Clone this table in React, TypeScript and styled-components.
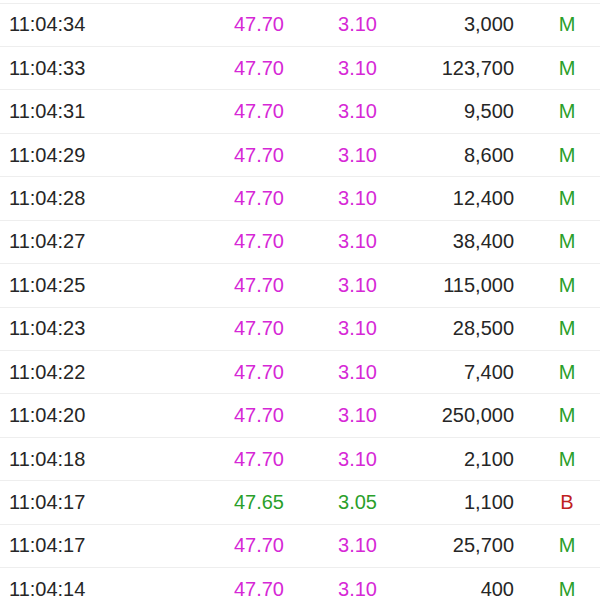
import React from "react";
import styled, { createGlobalStyle } from "styled-components";

const Global = createGlobalStyle`
  html, body { margin: 0; padding: 0; background: #ffffff; }
  body { font-family: "Liberation Sans", Arial, sans-serif; }
`;

const List = styled.div`
  width: 600px;
  height: 600px;
  overflow: hidden;
  padding-top: 2.5px;
  box-sizing: border-box;
  background: #fff;
`;

const Row = styled.div`
  display: grid;
  grid-template-columns: 1fr 120px 92px 138px 85px;
  align-items: center;
  height: 43.45px;
  box-sizing: border-box;
  border-top: 1px solid #eeeeee;
  padding-left: 9px;
  font-size: 20px;
  color: #262626;
`;

type Tone = "up" | "flat" | "down";

const toneColor: Record<Tone, string> = {
  up: "#d628d6",
  flat: "#2a9f2a",
  down: "#c0211f",
};

const Time = styled.span`
  text-align: left;
`;

const Num = styled.span<{ $tone?: Tone; $padRight?: number }>`
  text-align: right;
  padding-right: ${(p) => p.$padRight ?? 0}px;
  color: ${(p) => (p.$tone ? toneColor[p.$tone] : "#262626")};
`;

const Flag = styled.span<{ $tone: Tone }>`
  text-align: center;
  padding-left: 19px;
  color: ${(p) => toneColor[p.$tone]};
`;

const rows: [string, string, string, string, string][] = [
  ["11:04:34", "47.70", "3.10", "3,000", "M"],
  ["11:04:33", "47.70", "3.10", "123,700", "M"],
  ["11:04:31", "47.70", "3.10", "9,500", "M"],
  ["11:04:29", "47.70", "3.10", "8,600", "M"],
  ["11:04:28", "47.70", "3.10", "12,400", "M"],
  ["11:04:27", "47.70", "3.10", "38,400", "M"],
  ["11:04:25", "47.70", "3.10", "115,000", "M"],
  ["11:04:23", "47.70", "3.10", "28,500", "M"],
  ["11:04:22", "47.70", "3.10", "7,400", "M"],
  ["11:04:20", "47.70", "3.10", "250,000", "M"],
  ["11:04:18", "47.70", "3.10", "2,100", "M"],
  ["11:04:17", "47.65", "3.05", "1,100", "B"],
  ["11:04:17", "47.70", "3.10", "25,700", "M"],
  ["11:04:14", "47.70", "3.10", "400", "M"],
];

export default function App() {
  return (
    <>
      <Global />
      <List>
        {rows.map(([t, p, c, v, f], i) => {
          const tone: Tone = p === "47.70" ? "up" : "flat";
          const flagTone: Tone = f === "B" ? "down" : "flat";
          return (
            <Row key={i}>
              <Time>{t}</Time>
              <Num $tone={tone} $padRight={1}>{p}</Num>
              <Num $tone={tone}>{c}</Num>
              <Num $padRight={1}>{v}</Num>
              <Flag $tone={flagTone}>{f}</Flag>
            </Row>
          );
        })}
      </List>
    </>
  );
}
